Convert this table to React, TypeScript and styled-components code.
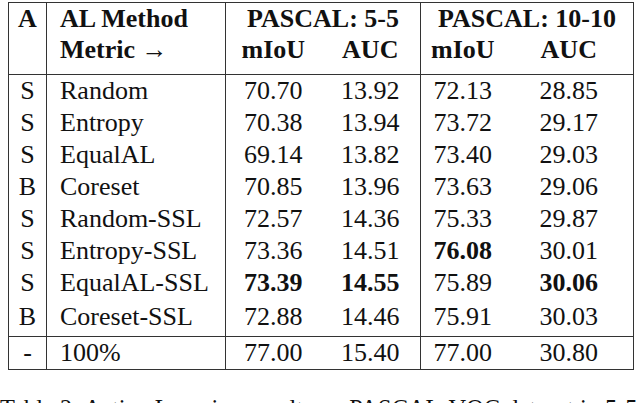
import styled, { createGlobalStyle } from "styled-components";

const GlobalStyle = createGlobalStyle`
  html, body {
    margin: 0;
    padding: 0;
    background: #ffffff;
  }
  body {
    font-family: "Liberation Serif", "Times New Roman", serif;
    color: #111111;
    overflow: hidden;
  }
`;

const Page = styled.div`
  width: 640px;
  height: 403px;
  overflow: hidden;
  padding: 2px 0 0 8px;
  box-sizing: border-box;
`;

const Table = styled.table`
  border-collapse: collapse;
  table-layout: fixed;
  width: 625px;
  border: 1px solid #333333;
  font-size: 26px;
`;

const HeadRow = styled.tr<{ $h: number; $rule?: boolean }>`
  height: ${(p) => p.$h}px;
  ${(p) => (p.$rule ? "border-bottom: 1px solid #333333;" : "")}
`;

const Row = styled.tr<{ $h: number; $rule?: boolean }>`
  height: ${(p) => p.$h}px;
  ${(p) => (p.$rule ? "border-top: 1px solid #333333;" : "")}
`;

const Cell = styled.td<{ $left?: boolean; $bold?: boolean; $rule?: boolean; $valign?: string }>`
  padding: ${(p) => (p.$left ? "0 0 0 13px" : "0")};
  text-align: ${(p) => (p.$left ? "left" : "center")};
  font-weight: ${(p) => (p.$bold ? 700 : 400)};
  vertical-align: ${(p) => p.$valign || "middle"};
  white-space: nowrap;
  line-height: 31px;
  ${(p) => (p.$rule ? "border-right: 1px solid #333333;" : "")}
`;

const Arrow = styled.span`
  font-weight: 400;
`;

const Caption = styled.div`
  margin: 24px 0 0 -8px;
  font-size: 24.4px;
  white-space: nowrap;
  line-height: 30px;
`;

type Line = [string, string, string, string, string, string];

const rows: Line[] = [
  ["S", "Random", "70.70", "13.92", "72.13", "28.85"],
  ["S", "Entropy", "70.38", "13.94", "73.72", "29.17"],
  ["S", "EqualAL", "69.14", "13.82", "73.40", "29.03"],
  ["B", "Coreset", "70.85", "13.96", "73.63", "29.06"],
  ["S", "Random-SSL", "72.57", "14.36", "75.33", "29.87"],
  ["S", "Entropy-SSL", "73.36", "14.51", "*76.08", "30.01"],
  ["S", "EqualAL-SSL", "*73.39", "*14.55", "75.89", "*30.06"],
  ["B", "Coreset-SSL", "72.88", "14.46", "75.91", "30.03"],
];

const full: Line = ["-", "100%", "77.00", "15.40", "77.00", "30.80"];

// a leading * marks the best value in a column
const Value = ({ v, rule }: { v: string; rule?: boolean }) => {
  const best = v.startsWith("*");
  return (
    <Cell $bold={best} $rule={rule}>
      {best ? v.slice(1) : v}
    </Cell>
  );
};

const DataRow = ({ r, h, rule }: { r: Line; h: number; rule?: boolean }) => (
  <Row $h={h} $rule={rule}>
    <Cell $rule>{r[0]}</Cell>
    <Cell $left $rule>
      {r[1]}
    </Cell>
    <Value v={r[2]} />
    <Value v={r[3]} rule />
    <Value v={r[4]} />
    <Value v={r[5]} />
  </Row>
);

export default function App() {
  return (
    <>
      <GlobalStyle />
      <Page>
        <Table>
          <colgroup>
            <col style={{ width: 38 }} />
            <col style={{ width: 179 }} />
            <col style={{ width: 95 }} />
            <col style={{ width: 100 }} />
            <col style={{ width: 84 }} />
            <col style={{ width: 129 }} />
          </colgroup>
          <thead>
            <HeadRow $h={31}>
              <Cell $bold $rule>
                A
              </Cell>
              <Cell $left $bold $rule>
                AL Method
              </Cell>
              <Cell $bold $rule colSpan={2}>
                PASCAL: 5-5
              </Cell>
              <Cell $bold colSpan={2}>
                PASCAL: 10-10
              </Cell>
            </HeadRow>
            <HeadRow $h={40} $rule>
              <Cell $rule $valign="top" />
              <Cell $left $bold $rule $valign="top">
                Metric <Arrow>→</Arrow>
              </Cell>
              <Cell $bold $valign="top">
                mIoU
              </Cell>
              <Cell $bold $rule $valign="top">
                AUC
              </Cell>
              <Cell $bold $valign="top">
                mIoU
              </Cell>
              <Cell $bold $valign="top">
                AUC
              </Cell>
            </HeadRow>
          </thead>
          <tbody>
            {rows.map((r, i) => (
              <DataRow key={r[1]} r={r} h={i === rows.length - 1 ? 38 : 32} />
            ))}
            <DataRow r={full} h={33} rule />
          </tbody>
        </Table>
        <Caption>Table 2: Active Learning results on PASCAL-VOC dataset in 5-5 and 10-10 settings.</Caption>
      </Page>
    </>
  );
}
